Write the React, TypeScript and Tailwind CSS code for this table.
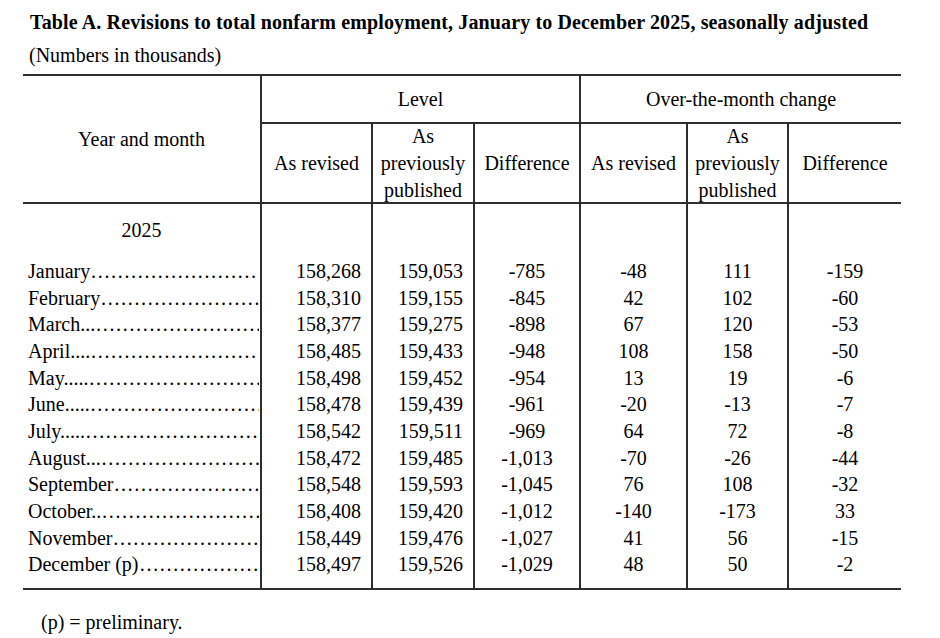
import React from "react";

const font = { fontFamily: '"Liberation Serif", "Times New Roman", serif' };

type Row = { label: string; lead: string; n: number; v: string[] };

const rows: Row[] = [
  { label: "January", lead: "", n: 9, v: ["158,268", "159,053", "-785", "-48", "111", "-159"] },
  { label: "February", lead: "", n: 8, v: ["158,310", "159,155", "-845", "42", "102", "-60"] },
  { label: "March", lead: "...", n: 9, v: ["158,377", "159,275", "-898", "67", "120", "-53"] },
  { label: "April", lead: "....", n: 9, v: ["158,485", "159,433", "-948", "108", "158", "-50"] },
  { label: "May", lead: ".....", n: 9, v: ["158,498", "159,452", "-954", "13", "19", "-6"] },
  { label: "June", lead: ".....", n: 9, v: ["158,478", "159,439", "-961", "-20", "-13", "-7"] },
  { label: "July", lead: ".....", n: 10, v: ["158,542", "159,511", "-969", "64", "72", "-8"] },
  { label: "August", lead: "...", n: 8, v: ["158,472", "159,485", "-1,013", "-70", "-26", "-44"] },
  { label: "September", lead: "", n: 8, v: ["158,548", "159,593", "-1,045", "76", "108", "-32"] },
  { label: "October", lead: "..", n: 8, v: ["158,408", "159,420", "-1,012", "-140", "-173", "33"] },
  { label: "November", lead: "", n: 8, v: ["158,449", "159,476", "-1,027", "41", "56", "-15"] },
  { label: "December (p)", lead: "", n: 6, v: ["158,497", "159,526", "-1,029", "48", "50", "-2"] },
];

const cols = "grid grid-cols-[239px_111px_102px_106px_107px_101px_112px]";
const bR = "border-r-2 border-[#2e2e2e]";

function Spacer({ h }: { h: string }) {
  return (
    <div className={`${cols} ${h}`}>
      <div className={bR} />
      <div className={bR} />
      <div className={bR} />
      <div className={bR} />
      <div className={bR} />
      <div className={bR} />
      <div />
    </div>
  );
}

export default function App() {
  return (
    <div className="w-[940px] h-[638px] bg-white text-black text-[20px] leading-[23px] overflow-hidden" style={font}>
      <div className="pt-[11px] pl-[30px] font-bold whitespace-nowrap tracking-[0.13px]">
        Table A. Revisions to total nonfarm employment, January to December 2025, seasonally adjusted
      </div>
      <div className="mt-[10px] pl-[29px]">(Numbers in thousands)</div>

      <div className="ml-[23px] mt-[7px] w-[878px] border-t-2 border-b-2 border-[#2e2e2e]">
        {/* header */}
        <div className={`${cols} grid-rows-[48px_78px] border-b-2 border-[#2e2e2e]`}>
          <div className={`row-span-2 ${bR} pt-[52px] text-center`}>Year and month</div>
          <div className={`col-span-3 ${bR} border-b-2 flex items-center justify-center`}>Level</div>
          <div className="col-span-3 border-b-2 border-[#2e2e2e] flex items-center justify-center">
            Over-the-month change
          </div>
          <div className={`${bR} flex items-center justify-center pt-[1px]`}>As revised</div>
          <div className={`${bR} flex items-center justify-center text-center leading-[27px] pt-[1px]`}>
            As
            <br />
            previously
            <br />
            published
          </div>
          <div className={`${bR} flex items-center justify-center pt-[1px]`}>Difference</div>
          <div className={`${bR} flex items-center justify-center pt-[1px]`}>As revised</div>
          <div className={`${bR} flex items-center justify-center text-center leading-[27px] pt-[1px]`}>
            As
            <br />
            previously
            <br />
            published
          </div>
          <div className="flex items-center justify-center pt-[1px]">Difference</div>
        </div>

        {/* body */}
        <Spacer h="h-[13px]" />
        <div className={`${cols} h-[27px]`}>
          <div className={`${bR} flex items-center justify-center`}>2025</div>
          <div className={bR} />
          <div className={bR} />
          <div className={bR} />
          <div className={bR} />
          <div className={bR} />
          <div />
        </div>
        <Spacer h="h-[14px]" />
        {rows.map((r) => (
          <div key={r.label} className={`${cols} h-[26.7px]`}>
            <div className={`${bR} flex items-center pl-[5px] pr-[1px] whitespace-nowrap`}>
              <span className="shrink-0">
                {r.label}
                {r.lead}
              </span>
              <span className="flex-1 min-w-0 overflow-hidden text-right">{"…".repeat(r.n)}</span>
            </div>
            <div className={`${bR} flex items-center justify-end pr-[10px]`}>{r.v[0]}</div>
            <div className={`${bR} flex items-center justify-end pr-[10px]`}>{r.v[1]}</div>
            <div className={`${bR} flex items-center justify-center`}>{r.v[2]}</div>
            <div className={`${bR} flex items-center justify-center`}>{r.v[3]}</div>
            <div className={`${bR} flex items-center justify-center`}>{r.v[4]}</div>
            <div className="flex items-center justify-center">{r.v[5]}</div>
          </div>
        ))}
        <Spacer h="h-[9.6px]" />
      </div>

      <div className="mt-[21px] pl-[41px]">(p) = preliminary.</div>
    </div>
  );
}
